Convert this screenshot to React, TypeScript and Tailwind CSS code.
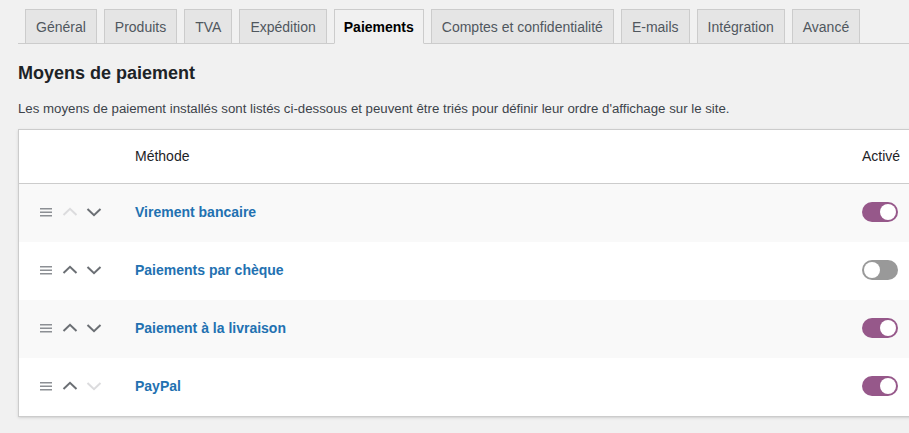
const tabs = [
  'Général',
  'Produits',
  'TVA',
  'Expédition',
  'Paiements',
  'Comptes et confidentialité',
  'E-mails',
  'Intégration',
  'Avancé',
];

const methods = [
  { name: 'Virement bancaire', enabled: true, canUp: false, canDown: true },
  { name: 'Paiements par chèque', enabled: false, canUp: true, canDown: true },
  { name: 'Paiement à la livraison', enabled: true, canUp: true, canDown: true },
  { name: 'PayPal', enabled: true, canUp: true, canDown: false },
];

function Chevron({ up, active }: { up: boolean; active: boolean }) {
  return (
    <svg
      width="16"
      height="16"
      viewBox="0 0 16 16"
      className={active ? 'text-[#6b6f74]' : 'text-[#dcdcde]'}
      aria-hidden
    >
      <path
        d={up ? 'M1.5 11 L8 4.8 L14.5 11' : 'M1.5 5 L8 11.2 L14.5 5'}
        fill="none"
        stroke="currentColor"
        strokeWidth="2"
      />
    </svg>
  );
}

function Toggle({ on }: { on: boolean }) {
  return (
    <span
      className={`flex h-5 w-9 items-center rounded-full px-[2px] ${
        on ? 'justify-end bg-[#96588a]' : 'justify-start bg-[#999]'
      }`}
    >
      <span className="h-4 w-4 rounded-full bg-white" />
    </span>
  );
}

export default function App() {
  return (
    <div
      className="h-[433px] w-[909px] overflow-hidden bg-[#f1f1f1] text-[13px] text-[#3c434a]"
      style={{ fontFamily: '"Liberation Sans", Arial, sans-serif' }}
    >
      <div className="pl-[18px] pt-[9px]">
        <nav className="flex border-b border-[#ccc] pl-[7px]">
          {tabs.map((t) => {
            const active = t === 'Paiements';
            return (
              <div
                key={t}
                className={`-mb-px mr-[7px] flex h-[35px] items-center border border-[#ccc] pt-[2px] text-[14px] ${
                  active
                    ? 'border-b-[#f1f1f1] bg-[#f1f1f1] px-[9px] font-bold text-black'
                    : 'bg-[#e5e5e5] px-[10px] text-[#50575e]'
                }`}
              >
                {t}
              </div>
            );
          })}
        </nav>

        <h2 className="mt-[17px] text-[18px] font-bold leading-6 text-[#1d2327]">Moyens de paiement</h2>
        <p className="mt-[14px] text-[13.25px] leading-5">
          Les moyens de paiement installés sont listés ci-dessous et peuvent être triés pour définir leur ordre
          d'affichage sur le site.
        </p>

        <div className="mt-[10px] w-[900px] border border-[#ccc] bg-white shadow-sm">
          <div className="flex h-[54px] items-center border-b border-[#ccc] text-[14px] text-[#1d2327]">
            <div className="w-[116px]" />
            <div className="flex-1">Méthode</div>
            <div className="w-[56px] pl-[1px]">Activé</div>
          </div>
          {methods.map((m, i) => (
            <div
              key={m.name}
              className={`flex h-[58px] items-center pb-[2px] ${i % 2 === 0 ? 'bg-[#f9f9f9]' : 'bg-white'}`}
            >
              <div className="flex w-[116px] items-center pl-[21px]">
                <svg width="12" height="10" viewBox="0 0 12 10" className="text-[#8c8f94]" aria-hidden>
                  <rect x="0" y="1" width="12" height="1.5" fill="currentColor" />
                  <rect x="0" y="4.5" width="12" height="1.5" fill="currentColor" />
                  <rect x="0" y="8" width="12" height="1.5" fill="currentColor" />
                </svg>
                <span className="ml-[10px]">
                  <Chevron up active={m.canUp} />
                </span>
                <span className="ml-[8px]">
                  <Chevron up={false} active={m.canDown} />
                </span>
              </div>
              <div className="flex-1 text-[14px] font-bold text-[#2271b1]">{m.name}</div>
              <div className="w-[56px] pl-[1px]">
                <Toggle on={m.enabled} />
              </div>
            </div>
          ))}
        </div>
      </div>
    </div>
  );
}
